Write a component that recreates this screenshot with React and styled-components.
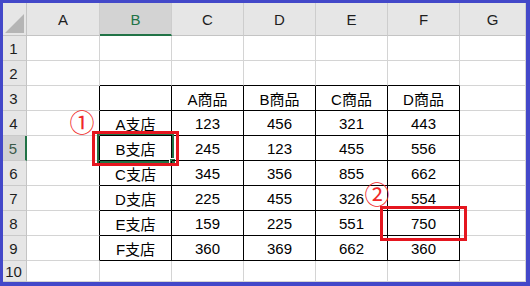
import React from "react";
import styled, { createGlobalStyle } from "styled-components";

const Global = createGlobalStyle`
  html, body { margin: 0; padding: 0; background: #fff; }
  body { font-family: "Liberation Sans", "Noto Sans CJK JP", sans-serif; }
`;

const Frame = styled.div`
  width: 530px;
  height: 286px;
  box-sizing: border-box;
  border-style: solid;
  border-color: #4348c9;
  border-width: 3px 4px 4px 3px;
  overflow: hidden;
  background: #fff;
`;

const Sheet = styled.div`
  display: grid;
  grid-template-columns: 24px 73px repeat(5, 72px) 1fr;
  grid-template-rows: 33px repeat(9, 25px) 1fr;
  height: 100%;
  font-family: "Liberation Sans", "Noto Sans CJK JP", sans-serif;
`;

const Corner = styled.div`
  background: #e6e6e6;
  border-right: 1px solid #c4c4c4;
  border-bottom: 1px solid #c4c4c4;
  display: flex;
  align-items: flex-end;
  justify-content: flex-end;
  padding: 0 2px 2px 0;
`;

const ColHead = styled.div`
  background: ${(p) => (p.$sel ? "#d3d3d3" : "#e6e6e6")};
  color: ${(p) => (p.$sel ? "#217346" : "#1e1e1e")};
  border-right: 1px solid #cdcdcd;
  border-bottom: ${(p) => (p.$sel ? "2px solid #217346" : "1px solid #c4c4c4")};
  display: flex;
  align-items: center;
  justify-content: center;
  font-size: 15px;
  padding-top: 1px;
  box-sizing: border-box;
`;

const RowHead = styled.div`
  background: ${(p) => (p.$sel ? "#d3d3d3" : "#e6e6e6")};
  color: ${(p) => (p.$sel ? "#3b5a48" : "#1e1e1e")};
  border-right: ${(p) => (p.$sel ? "2px solid #217346" : "1px solid #c4c4c4")};
  border-bottom: 1px solid #cacaca;
  display: flex;
  align-items: center;
  justify-content: center;
  font-size: 15px;
  padding-right: 2px;
  box-sizing: border-box;
`;

const Cell = styled.div`
  position: relative;
  box-sizing: border-box;
  border-right: 1px solid ${(p) => (p.$rb ? "#000" : "#d4d4d4")};
  border-bottom: 1px solid ${(p) => (p.$bb ? "#000" : "#d4d4d4")};
  display: flex;
  align-items: center;
  justify-content: ${(p) => (p.$end ? "flex-end" : "center")};
  padding: ${(p) => (p.$end ? "0 5px 0 0" : "1px 0 0 0")};
  font-size: 15px;
  color: #000;
`;

const Selection = styled.div`
  position: absolute;
  inset: -3px;
  border: 2px solid #217346;
  pointer-events: none;
  &::after {
    content: "";
    position: absolute;
    right: -4px;
    bottom: -4px;
    width: 5px;
    height: 5px;
    background: #217346;
    border: 1px solid #fff;
  }
`;

const RedBox = styled.div`
  position: absolute;
  inset: -5px -8px -6px -8px;
  border: 3px solid #e5161f;
  pointer-events: none;
  z-index: 2;
`;

const Callout = styled.span`
  width: 24px;
  height: 24px;
  display: flex;
  align-items: center;
  justify-content: center;
  font-family: "Noto Sans CJK JP", sans-serif;
  font-size: 25px;
  line-height: 1;
  color: #f02828;
  margin-top: -3px;
`;

const EdgeCallout = styled(Callout)`
  position: absolute;
  right: -2px;
  top: -2px;
  z-index: 2;
`;

const cols = ["A", "B", "C", "D", "E", "F", "G"];

const data = {
  3: ["", "A商品", "B商品", "C商品", "D商品"],
  4: ["A支店", "123", "456", "321", "443"],
  5: ["B支店", "245", "123", "455", "556"],
  6: ["C支店", "345", "356", "855", "662"],
  7: ["D支店", "225", "455", "326", "554"],
  8: ["E支店", "159", "225", "551", "750"],
  9: ["F支店", "360", "369", "662", "360"],
};

export default function App() {
  const rows = [1, 2, 3, 4, 5, 6, 7, 8, 9, 10];
  return (
    <>
      <Global />
      <Frame>
        <Sheet>
          <Corner>
            <svg width="19" height="19" viewBox="0 0 19 19">
              <polygon points="19,0 19,19 0,19" fill="#b5b5b5" />
            </svg>
          </Corner>
          {cols.map((c) => (
            <ColHead key={c} $sel={c === "B"}>
              {c}
            </ColHead>
          ))}
          {rows.map((r) => {
            const inTable = r >= 3 && r <= 9;
            return (
              <React.Fragment key={r}>
                <RowHead $sel={r === 5}>{r}</RowHead>
                {cols.map((c, ci) => {
                  const id = c + r;
                  const tableCol = ci >= 1 && ci <= 5;
                  const rb = inTable && ci <= 5;
                  const bb = tableCol && r >= 2 && r <= 9;
                  const text = inTable && tableCol ? data[r][ci - 1] : "";
                  return (
                    <Cell key={c} $rb={rb} $bb={bb} $end={id === "A4"}>
                      {text}
                      {id === "A4" && <Callout>①</Callout>}
                      {id === "E7" && <EdgeCallout>②</EdgeCallout>}
                      {id === "B5" && <Selection />}
                      {(id === "B5" || id === "F8") && <RedBox />}
                    </Cell>
                  );
                })}
              </React.Fragment>
            );
          })}
        </Sheet>
      </Frame>
    </>
  );
}
